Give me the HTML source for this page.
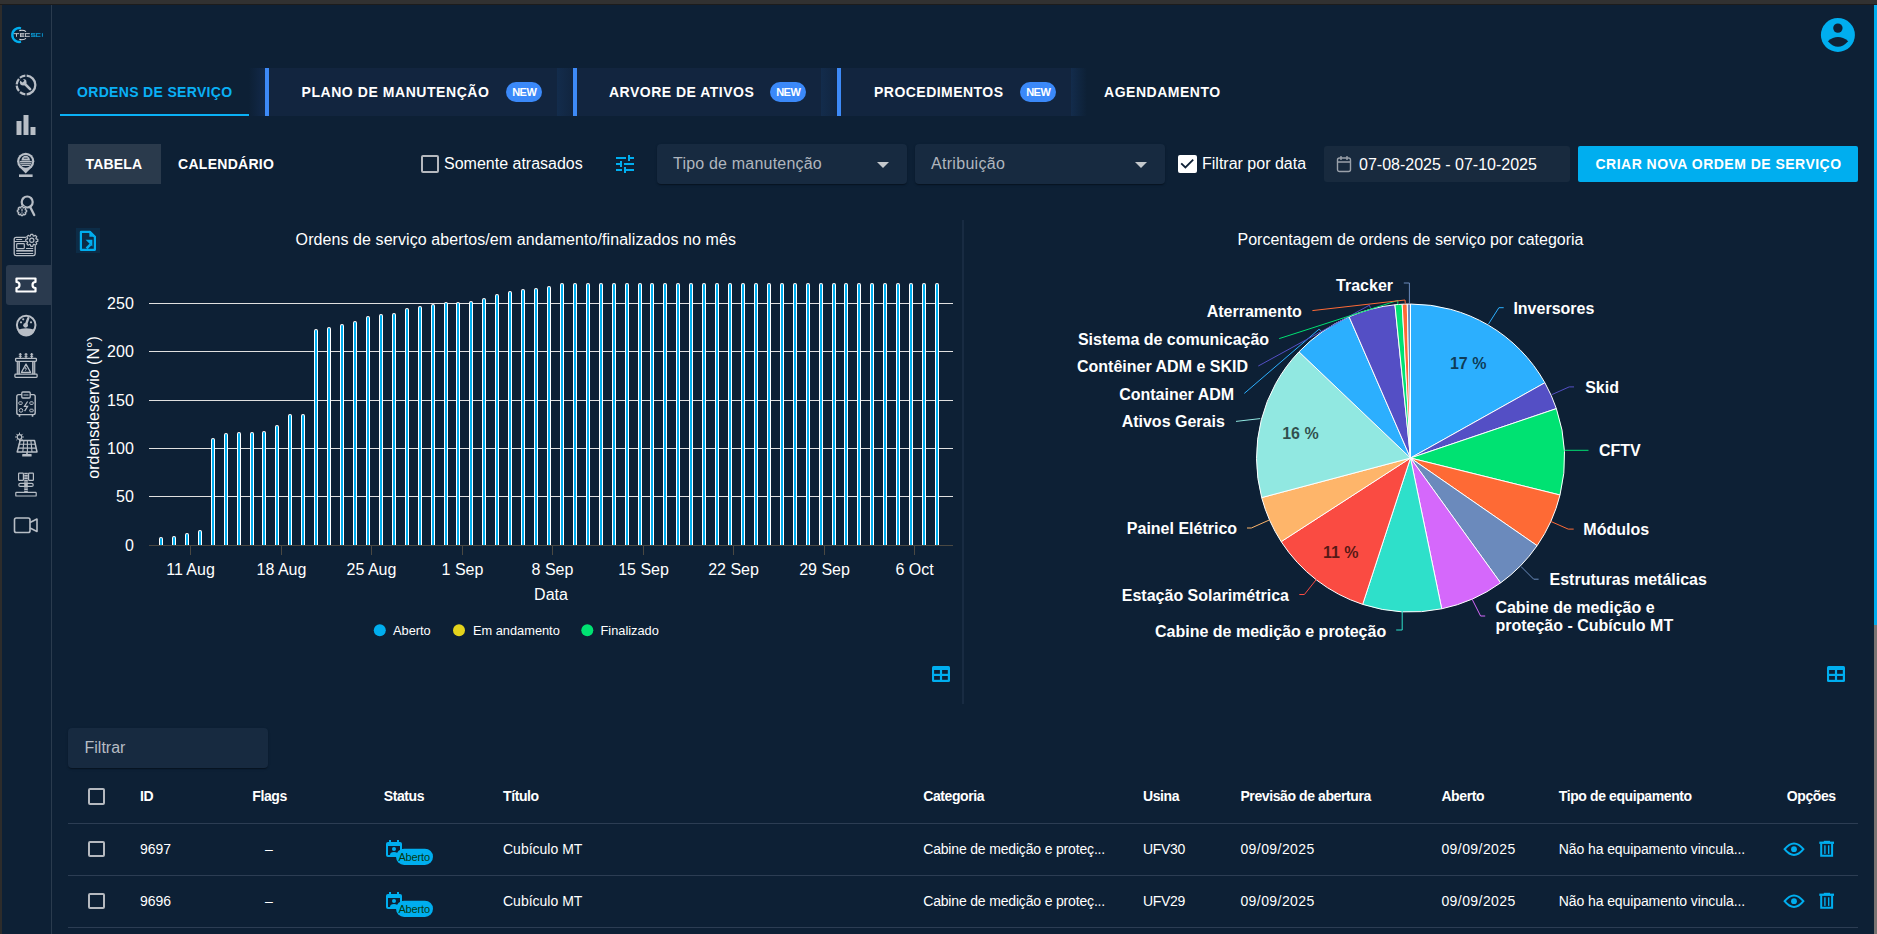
<!DOCTYPE html>
<html><head><meta charset="utf-8">
<style>
*{box-sizing:border-box;margin:0;padding:0}
html,body{width:1877px;height:934px;overflow:hidden;background:#0d2035;font-family:"Liberation Sans",sans-serif;color:#fff}
.a{position:absolute;white-space:nowrap;line-height:1}
#topbar{position:absolute;left:0;top:0;width:1877px;height:4px;background:#313131;border-bottom:1px solid #1c1c1c;box-sizing:content-box}
#leftbar{position:absolute;left:0;top:5px;width:2px;height:929px;background:#2d2c2b}
#sbline{position:absolute;left:51px;top:5px;width:1px;height:929px;background:#2a3b4e}
#scroll{position:absolute;left:1874px;top:5px;width:3px;height:929px;background:#7a7472}
#thumb{position:absolute;left:1874px;top:5px;width:3px;height:620px;background:#00aeef}
.tab{position:absolute;top:68px;height:48px;background:#12253f}
.grad{position:absolute;top:68px;height:48px;width:16px}
.bbar{position:absolute;top:68px;height:48px;width:4px;background:#3d8af7}
.tt{position:absolute;top:84.8px;font-size:14px;font-weight:bold;line-height:1;white-space:nowrap}
.new{position:absolute;top:82px;height:20px;width:36px;border-radius:10px;background:#3b89f9;font-size:11px;font-weight:bold;line-height:20px;text-align:center;letter-spacing:-0.5px;padding-left:0.5px}
.sel{position:absolute;top:144px;height:40px;background:#172a40;border-radius:4px;box-shadow:0 2px 1px -1px rgba(0,0,0,.2),0 1px 1px 0 rgba(0,0,0,.14),0 1px 3px 0 rgba(0,0,0,.12)}
.hd{position:absolute;top:789.3px;font-size:14px;font-weight:bold;line-height:1;white-space:nowrap;letter-spacing:-0.4px}
.cell{position:absolute;font-size:14px;line-height:1;white-space:nowrap}
.hr{position:absolute;left:68px;width:1790px;height:1px;background:#2c3d53}
.cb{position:absolute;width:17px;height:17px;border:2px solid #b5b9bf;border-radius:2px}
</style></head>
<body>
<div id="topbar"></div>
<div id="leftbar"></div>
<div id="sbline"></div>

<!-- SIDEBAR -->
<div class="a" style="left:6px;top:265px;width:45px;height:40px;background:#2a3a4e;border-radius:3px 0 0 3px"></div>
<svg class="a" style="left:0;top:0" width="52" height="560">
<path d="M21 28.3A7 6.9 0 1 0 21 41.7" stroke="#00aeef" stroke-width="2.4" fill="none"/>
<path d="M19.3 30.6Q23.5 29.6 26 31.6M19.3 39.4Q23.5 40.4 26 38.4" stroke="#d6d9dd" stroke-width="1.1" fill="none"/>
<path d="M13.8 33.65h5.4M16.5 33.6v3.2M20 33.65h4.4M20 35h4M20 36.35h4.4M20.45 33.6v3.2M25 33.65h4.8M25 36.35h4.8M25.45 33.6v3.2" stroke="#c9cdd2" stroke-width="0.9" fill="none"/>
<path d="M31 33.65h4.4M31.45 33.6v1.4M31 35h4M34.95 35v1.8M31 36.35h4.4M36 33.65h4.5M36 36.35h4.5M36.45 33.6v3.2M42.4 33.2v3.6" stroke="#0a9bd6" stroke-width="0.9" fill="none"/>
<path d="M26.65 75.72A9.3 9.3 0 0 1 26.65 94.28M25.35 94.28A9.3 9.3 0 0 1 20.02 92.12M18.98 91.10A9.3 9.3 0 0 1 16.72 85.65M16.72 84.35A9.3 9.3 0 0 1 18.98 78.90M20.02 77.88A9.3 9.3 0 0 1 25.35 75.72" stroke="#b8bec6" stroke-width="2.3" fill="none"/>
<path d="M24.5 83.5l5.6 5.6" stroke="#b8bec6" stroke-width="2.6" stroke-linecap="round"/><circle cx="23.2" cy="82.2" r="3.3" fill="#b8bec6"/><path d="M19.5 80.2l3.2 2.2 1.6-1.6-2.2-3.2z" fill="#0d2035"/>
<rect x="16.5" y="121" width="5" height="14" fill="#b8bec6"/><rect x="23.5" y="115" width="5" height="20" fill="#b8bec6"/><rect x="30.5" y="127" width="5" height="8" fill="#b8bec6"/>
<circle cx="25.7" cy="161.3" r="8.6" fill="#b8bec6"/><path d="M19.2 166.8l6.5 6.6 6.5-6.6z" fill="#b8bec6"/><rect x="19" y="174.4" width="13.6" height="2.6" fill="#b8bec6"/>
<circle cx="25.7" cy="161.3" r="6.4" fill="#0d2035"/>
<path d="M21.4 160.6a4.3 4.8 0 0 1 8.6 0z" fill="#b8bec6"/><rect x="19.6" y="160.9" width="12.2" height="1.5" fill="#b8bec6"/><rect x="20.2" y="163.1" width="11" height="1.3" fill="#b8bec6"/><rect x="21.5" y="165" width="8.4" height="1" fill="#b8bec6"/><path d="M23.8 158.2h3.8" stroke="#0d2035" stroke-width="0.8"/>
<circle cx="27.2" cy="202" r="5.5" stroke="#b8bec6" stroke-width="2.2" fill="none"/><path d="M30.2 207l4 8" stroke="#b8bec6" stroke-width="2.3" stroke-linecap="round"/>
<circle cx="22" cy="211" r="5.2" fill="#0d2035"/><path d="M21.23 206.36L22.77 206.36L23.15 207.69L23.53 207.85L24.73 207.18L25.82 208.27L25.15 209.47L25.31 209.85L26.64 210.23L26.64 211.77L25.31 212.15L25.15 212.53L25.82 213.73L24.73 214.82L23.53 214.15L23.15 214.31L22.77 215.64L21.23 215.64L20.85 214.31L20.47 214.15L19.27 214.82L18.18 213.73L18.85 212.53L18.69 212.15L17.36 211.77L17.36 210.23L18.69 209.85L18.85 209.47L18.18 208.27L19.27 207.18L20.47 207.85L20.85 207.69Z" stroke="#b8bec6" stroke-width="1.3" fill="#0d2035" stroke-linejoin="round"/>
<rect x="21.4" y="208.6" width="1.2" height="2.9" fill="#b8bec6"/><rect x="21.4" y="212.3" width="1.2" height="1.2" fill="#b8bec6"/>
<rect x="14.2" y="237.3" width="21" height="18.3" rx="2" stroke="#b8bec6" stroke-width="1.3" fill="none"/><path d="M14.2 241.5h12M16.2 239.5h6M26 248.5h7.2M16.2 253.5h17" stroke="#b8bec6" stroke-width="1.1"/><rect x="16.2" y="250" width="17" height="1.6" fill="#b8bec6"/><rect x="16.7" y="243.6" width="7.6" height="5" rx="0.8" stroke="#b8bec6" stroke-width="1.2" fill="none"/>
<circle cx="31.8" cy="240.3" r="6.6" fill="#0d2035"/><path d="M30.80 234.28L32.80 234.28L33.27 236.05L33.76 236.25L35.35 235.34L36.76 236.75L35.85 238.34L36.05 238.83L37.82 239.30L37.82 241.30L36.05 241.77L35.85 242.26L36.76 243.85L35.35 245.26L33.76 244.35L33.27 244.55L32.80 246.32L30.80 246.32L30.33 244.55L29.84 244.35L28.25 245.26L26.84 243.85L27.75 242.26L27.55 241.77L25.78 241.30L25.78 239.30L27.55 238.83L27.75 238.34L26.84 236.75L28.25 235.34L29.84 236.25L30.33 236.05Z" stroke="#b8bec6" stroke-width="1.2" fill="#0d2035" stroke-linejoin="round"/><circle cx="31.8" cy="240.3" r="2.1" stroke="#b8bec6" stroke-width="1.2" fill="none"/>
<path d="M16.5 278.5h19v3.5a3 3 0 0 0 0 6v3.5h-19v-3.5a3 3 0 0 0 0-6z" stroke="#fff" stroke-width="2.2" fill="none" stroke-linejoin="round"/>
<circle cx="26.2" cy="325" r="9.3" stroke="#b8bec6" stroke-width="2" fill="none"/><path d="M17.3 330Q26.2 326.6 35.1 330A9.4 9.4 0 0 1 17.3 330Z" fill="#b8bec6"/>
<path d="M25.6 325.5L28.3 318.2" stroke="#b8bec6" stroke-width="2.4" stroke-linecap="round"/><circle cx="25.6" cy="325.3" r="2.4" fill="#b8bec6"/><circle cx="21" cy="322.3" r="1.1" fill="#b8bec6"/><circle cx="23.2" cy="319.3" r="1.1" fill="#b8bec6"/><circle cx="31" cy="322.3" r="1.1" fill="#b8bec6"/>
<path d="M20.3 353v5M26 353v5M31.7 353v5" stroke="#b8bec6" stroke-width="1.3"/><path d="M18.8 354.3h3M24.5 354.3h3M30.2 354.3h3M18.8 356.3h3M24.5 356.3h3M30.2 356.3h3" stroke="#b8bec6" stroke-width="1"/>
<rect x="15.6" y="358.3" width="20.8" height="3" rx="0.8" stroke="#b8bec6" stroke-width="1.3" fill="none"/><rect x="14.9" y="374.2" width="22.2" height="3.2" rx="0.8" stroke="#b8bec6" stroke-width="1.3" fill="none"/>
<path d="M17.3 361.3v12.9M34.7 361.3v12.9" stroke="#b8bec6" stroke-width="1.2"/><rect x="18.3" y="361.3" width="1.6" height="12.9" fill="#b8bec6"/><rect x="32.1" y="361.3" width="1.6" height="12.9" fill="#b8bec6"/>
<path d="M26 364l-4.6 8.4h9.2z" stroke="#b8bec6" stroke-width="1.2" fill="none" stroke-linejoin="round"/><path d="M26.4 366.2l-1.6 2.4h1.8l-1.2 2.2" stroke="#b8bec6" stroke-width="0.8" fill="none"/>
<rect x="16.8" y="394.6" width="18.4" height="20" rx="1.8" stroke="#b8bec6" stroke-width="1.4" fill="none"/><rect x="21.8" y="392" width="8.4" height="6" rx="1" stroke="#b8bec6" stroke-width="1.3" fill="#0d2035"/><path d="M23.5 395h5" stroke="#b8bec6" stroke-width="1"/>
<path d="M19.5 414.6v2.2M32.5 414.6v2.2" stroke="#b8bec6" stroke-width="1.6"/><rect x="18.8" y="401.8" width="3.4" height="2.6" rx="0.8" stroke="#b8bec6" stroke-width="1" fill="none"/><rect x="29.8" y="401.8" width="3.4" height="2.6" rx="0.8" stroke="#b8bec6" stroke-width="1" fill="none"/><rect x="29.8" y="409.2" width="3.4" height="2.6" rx="0.8" stroke="#b8bec6" stroke-width="1" fill="none"/><circle cx="21" cy="410.4" r="1.8" stroke="#b8bec6" stroke-width="1" fill="none"/>
<path d="M27.6 401.5l-3.2 4.8h3.2l-3 4.8" stroke="#b8bec6" stroke-width="1.2" fill="none"/>
<circle cx="19.5" cy="437" r="2.3" stroke="#b8bec6" stroke-width="1.2" fill="none"/><path d="M19.5 432.6v1.6M19.5 439.8v1.6M15.1 437h1.6M22.3 437h1.6M16.4 433.9l1.1 1.1M21.5 439l1.1 1.1M16.4 440.1l1.1-1.1M21.5 435l1.1-1.1" stroke="#b8bec6" stroke-width="1"/>
<path d="M20.2 440.5H34.5L37 452H17.2Z" stroke="#b8bec6" stroke-width="1.5" fill="none" stroke-linejoin="round"/><path d="M18.6 444.3h16.8M17.9 448.1h18.2M23.9 440.5l-1.1 11.5M27.4 440.5v11.5M30.9 440.5l1.1 11.5" stroke="#b8bec6" stroke-width="1.1"/>
<path d="M27 452v2.5" stroke="#b8bec6" stroke-width="1.6"/><rect x="22.2" y="454" width="9.4" height="2.6" rx="0.6" fill="#b8bec6"/>
<rect x="18.6" y="473.2" width="4.8" height="7.2" rx="0.6" stroke="#b8bec6" stroke-width="1.2" fill="none"/><rect x="28.6" y="473.2" width="4.8" height="7.2" rx="0.6" stroke="#b8bec6" stroke-width="1.2" fill="none"/>
<rect x="24.2" y="472.8" width="3.6" height="20" fill="#b8bec6"/><path d="M24.2 474.5h3.6M24.2 477h3.6M24.2 479.5h3.6M24.2 482h3.6M24.2 488h3.6M24.2 490.5h3.6" stroke="#0d2035" stroke-width="0.7"/>
<rect x="18.8" y="483.4" width="14.4" height="3" rx="1.5" stroke="#b8bec6" stroke-width="1.2" fill="none"/><rect x="15.8" y="492.4" width="20.4" height="3.6" rx="0.6" stroke="#b8bec6" stroke-width="1.2" fill="none"/>
<rect x="14.5" y="518" width="15.5" height="14.5" rx="1.8" stroke="#b8bec6" stroke-width="1.6" fill="none"/><path d="M30 522.5l7-3.5v12.5l-7-3.5" stroke="#b8bec6" stroke-width="1.6" fill="none" stroke-linejoin="round"/>
</svg>

<!-- avatar -->
<svg class="a" style="left:1812px;top:10px" width="52" height="52"><circle cx="25.9" cy="24.9" r="17" fill="#00aeef"/><circle cx="25.9" cy="18.1" r="4.7" fill="#0f2136"/><path d="M15.9 31.2Q25.9 22.8 36.2 31.2Q25.9 42.2 15.9 31.2Z" fill="#0f2136"/></svg>

<!-- TABS -->
<div class="tt" style="left:77px;color:#0ab0f5;letter-spacing:0.33px">ORDENS DE SERVIÇO</div>
<div class="a" style="left:60px;top:114px;width:189px;height:2px;background:#0ab0f5"></div>

<div class="grad" style="left:249px;background:linear-gradient(90deg,rgba(17,40,70,0),#12294a)"></div>
<div class="bbar" style="left:265px"></div>
<div class="tab" style="left:269px;width:288px"></div>
<div class="tt" style="left:301.5px;letter-spacing:0.56px">PLANO DE MANUTENÇÃO</div>
<div class="new" style="left:506px">NEW</div>

<div class="grad" style="left:557px;background:linear-gradient(90deg,#132c4c,#11253f)"></div>
<div class="bbar" style="left:573px"></div>
<div class="tab" style="left:577px;width:244px"></div>
<div class="tt" style="left:609px;letter-spacing:0.49px">ARVORE DE ATIVOS</div>
<div class="new" style="left:770px">NEW</div>

<div class="grad" style="left:821px;background:linear-gradient(90deg,#132c4c,#11253f)"></div>
<div class="bbar" style="left:837px"></div>
<div class="tab" style="left:841px;width:230px"></div>
<div class="tt" style="left:874px;letter-spacing:0.47px">PROCEDIMENTOS</div>
<div class="new" style="left:1020px">NEW</div>
<div class="grad" style="left:1071px;background:linear-gradient(90deg,#132c4c,rgba(17,37,63,0))"></div>

<div class="tt" style="left:1104px;letter-spacing:0.52px">AGENDAMENTO</div>

<!-- FILTER ROW -->
<div class="a" style="left:68px;top:144px;width:93px;height:40px;background:#2a3a4c"></div>
<div class="tt" style="left:85.5px;top:157.3px;letter-spacing:0.2px">TABELA</div>
<div class="tt" style="left:178px;top:157.3px;letter-spacing:0.29px">CALENDÁRIO</div>

<div class="cb" style="left:420.5px;top:155px;width:18px;height:18px"></div>
<div class="a" style="left:444px;top:155.5px;font-size:16px">Somente atrasados</div>
<svg class="a" style="left:613px;top:152px" width="24" height="24" viewBox="0 0 24 24"><path fill="#00aeef" d="M3 17v2h6v-2H3zM3 5v2h10V5H3zm10 16v-2h8v-2h-8v-2h-2v6h2zM7 9v2H3v2h4v2h2V9H7zm14 4v-2H11v2h10zm-6-4h2V7h4V5h-4V3h-2v6z"/></svg>

<div class="sel" style="left:657px;width:250px"></div>
<div class="a" style="left:673px;top:156px;font-size:16px;color:#b0b6be;letter-spacing:0.2px">Tipo de manutenção</div>
<svg class="a" style="left:876px;top:161px" width="14" height="7"><path d="M1 1h12L7 7z" fill="#c4c8cc"/></svg>

<div class="sel" style="left:915px;width:250px"></div>
<div class="a" style="left:931px;top:156px;font-size:16px;color:#b0b6be;letter-spacing:0.3px">Atribuição</div>
<svg class="a" style="left:1134px;top:161px" width="14" height="7"><path d="M1 1h12L7 7z" fill="#c4c8cc"/></svg>

<div class="a" style="left:1178px;top:155px;width:19px;height:18px;background:#fff;border-radius:2px"></div>
<svg class="a" style="left:1178px;top:155px" width="19" height="18" viewBox="0 0 19 18"><path d="M3.2 8.3l4.2 4.2 7.8-7.8" stroke="#0f2136" stroke-width="1.8" fill="none"/></svg>
<div class="a" style="left:1202px;top:155.5px;font-size:16px">Filtrar por data</div>

<div class="a" style="left:1324px;top:146px;width:246px;height:36px;background:#182a3e;border-radius:3px"></div>
<svg class="a" style="left:1336px;top:155px" width="16" height="18" viewBox="0 0 16 18"><rect x="1.5" y="3" width="13" height="13.5" rx="2" stroke="#9aa1aa" stroke-width="1.4" fill="none"/><path d="M1.5 7h13M5 1v4M11 1v4" stroke="#9aa1aa" stroke-width="1.4"/></svg>
<div class="a" style="left:1359px;top:157px;font-size:16px">07-08-2025 - 07-10-2025</div>

<div class="a" style="left:1578px;top:146px;width:280px;height:36px;background:#00aeef;border-radius:2px"></div>
<div class="tt" style="left:1595.5px;top:157.2px;letter-spacing:0.48px">CRIAR NOVA ORDEM DE SERVIÇO</div>

<!-- CHARTS -->
<svg class="a" style="left:0;top:0" width="1877" height="934">
<rect x="149" y="303" width="804" height="1" fill="#e0e0e0"/>
<text x="133.8" y="309.3" text-anchor="end" font-size="16" fill="#fff">250</text>
<rect x="149" y="351" width="804" height="1" fill="#e0e0e0"/>
<text x="133.8" y="357.3" text-anchor="end" font-size="16" fill="#fff">200</text>
<rect x="149" y="400" width="804" height="1" fill="#e0e0e0"/>
<text x="133.8" y="406.3" text-anchor="end" font-size="16" fill="#fff">150</text>
<rect x="149" y="448" width="804" height="1" fill="#e0e0e0"/>
<text x="133.8" y="454.3" text-anchor="end" font-size="16" fill="#fff">100</text>
<rect x="149" y="496" width="804" height="1" fill="#e0e0e0"/>
<text x="133.8" y="502.3" text-anchor="end" font-size="16" fill="#fff">50</text>
<text x="133.8" y="550.6" text-anchor="end" font-size="16" fill="#fff">0</text>
<rect x="190" y="546" width="1" height="9" fill="#4a4842"/>
<text x="190.5" y="575.4" text-anchor="middle" font-size="16" fill="#fff">11 Aug</text>
<rect x="281" y="546" width="1" height="9" fill="#4a4842"/>
<text x="281.5" y="575.4" text-anchor="middle" font-size="16" fill="#fff">18 Aug</text>
<rect x="371" y="546" width="1" height="9" fill="#4a4842"/>
<text x="371.5" y="575.4" text-anchor="middle" font-size="16" fill="#fff">25 Aug</text>
<rect x="462" y="546" width="1" height="9" fill="#4a4842"/>
<text x="462.5" y="575.4" text-anchor="middle" font-size="16" fill="#fff">1 Sep</text>
<rect x="552" y="546" width="1" height="9" fill="#4a4842"/>
<text x="552.5" y="575.4" text-anchor="middle" font-size="16" fill="#fff">8 Sep</text>
<rect x="643" y="546" width="1" height="9" fill="#4a4842"/>
<text x="643.5" y="575.4" text-anchor="middle" font-size="16" fill="#fff">15 Sep</text>
<rect x="733" y="546" width="1" height="9" fill="#4a4842"/>
<text x="733.5" y="575.4" text-anchor="middle" font-size="16" fill="#fff">22 Sep</text>
<rect x="824" y="546" width="1" height="9" fill="#4a4842"/>
<text x="824.5" y="575.4" text-anchor="middle" font-size="16" fill="#fff">29 Sep</text>
<rect x="914" y="546" width="1" height="9" fill="#4a4842"/>
<text x="914.5" y="575.4" text-anchor="middle" font-size="16" fill="#fff">6 Oct</text>
<text x="551" y="600.2" text-anchor="middle" font-size="16" fill="#fff">Data</text>
<text transform="translate(98.5,407.5) rotate(-90)" text-anchor="middle" font-size="16" fill="#fff">ordensdeservio (N°)</text>
<path d="M159 545V539a2 2 0 0 1 4 0V545z" fill="#fff"/>
<path d="M160 545V539a1 1 0 0 1 2 0V545z" fill="#00aeef"/>
<path d="M172 545V538a2 2 0 0 1 4 0V545z" fill="#fff"/>
<path d="M173 545V538a1 1 0 0 1 2 0V545z" fill="#00aeef"/>
<path d="M185 545V535a2 2 0 0 1 4 0V545z" fill="#fff"/>
<path d="M186 545V535a1 1 0 0 1 2 0V545z" fill="#00aeef"/>
<path d="M198 545V532a2 2 0 0 1 4 0V545z" fill="#fff"/>
<path d="M199 545V532a1 1 0 0 1 2 0V545z" fill="#00aeef"/>
<path d="M211 545V440a2 2 0 0 1 4 0V545z" fill="#fff"/>
<path d="M212 545V440a1 1 0 0 1 2 0V545z" fill="#00aeef"/>
<path d="M224 545V435a2 2 0 0 1 4 0V545z" fill="#fff"/>
<path d="M225 545V435a1 1 0 0 1 2 0V545z" fill="#00aeef"/>
<path d="M237 545V434a2 2 0 0 1 4 0V545z" fill="#fff"/>
<path d="M238 545V434a1 1 0 0 1 2 0V545z" fill="#00aeef"/>
<path d="M250 545V434a2 2 0 0 1 4 0V545z" fill="#fff"/>
<path d="M251 545V434a1 1 0 0 1 2 0V545z" fill="#00aeef"/>
<path d="M262 545V433a2 2 0 0 1 4 0V545z" fill="#fff"/>
<path d="M263 545V433a1 1 0 0 1 2 0V545z" fill="#00aeef"/>
<path d="M275 545V427a2 2 0 0 1 4 0V545z" fill="#fff"/>
<path d="M276 545V427a1 1 0 0 1 2 0V545z" fill="#00aeef"/>
<path d="M288 545V416a2 2 0 0 1 4 0V545z" fill="#fff"/>
<path d="M289 545V416a1 1 0 0 1 2 0V545z" fill="#00aeef"/>
<path d="M301 545V416a2 2 0 0 1 4 0V545z" fill="#fff"/>
<path d="M302 545V416a1 1 0 0 1 2 0V545z" fill="#00aeef"/>
<path d="M314 545V331a2 2 0 0 1 4 0V545z" fill="#fff"/>
<path d="M315 545V331a1 1 0 0 1 2 0V545z" fill="#00aeef"/>
<path d="M327 545V329a2 2 0 0 1 4 0V545z" fill="#fff"/>
<path d="M328 545V329a1 1 0 0 1 2 0V545z" fill="#00aeef"/>
<path d="M340 545V326a2 2 0 0 1 4 0V545z" fill="#fff"/>
<path d="M341 545V326a1 1 0 0 1 2 0V545z" fill="#00aeef"/>
<path d="M353 545V323a2 2 0 0 1 4 0V545z" fill="#fff"/>
<path d="M354 545V323a1 1 0 0 1 2 0V545z" fill="#00aeef"/>
<path d="M366 545V318a2 2 0 0 1 4 0V545z" fill="#fff"/>
<path d="M367 545V318a1 1 0 0 1 2 0V545z" fill="#00aeef"/>
<path d="M379 545V316a2 2 0 0 1 4 0V545z" fill="#fff"/>
<path d="M380 545V316a1 1 0 0 1 2 0V545z" fill="#00aeef"/>
<path d="M392 545V315a2 2 0 0 1 4 0V545z" fill="#fff"/>
<path d="M393 545V315a1 1 0 0 1 2 0V545z" fill="#00aeef"/>
<path d="M405 545V310a2 2 0 0 1 4 0V545z" fill="#fff"/>
<path d="M406 545V310a1 1 0 0 1 2 0V545z" fill="#00aeef"/>
<path d="M418 545V308a2 2 0 0 1 4 0V545z" fill="#fff"/>
<path d="M419 545V308a1 1 0 0 1 2 0V545z" fill="#00aeef"/>
<path d="M431 545V306a2 2 0 0 1 4 0V545z" fill="#fff"/>
<path d="M432 545V306a1 1 0 0 1 2 0V545z" fill="#00aeef"/>
<path d="M444 545V304a2 2 0 0 1 4 0V545z" fill="#fff"/>
<path d="M445 545V304a1 1 0 0 1 2 0V545z" fill="#00aeef"/>
<path d="M456 545V304a2 2 0 0 1 4 0V545z" fill="#fff"/>
<path d="M457 545V304a1 1 0 0 1 2 0V545z" fill="#00aeef"/>
<path d="M469 545V303a2 2 0 0 1 4 0V545z" fill="#fff"/>
<path d="M470 545V303a1 1 0 0 1 2 0V545z" fill="#00aeef"/>
<path d="M482 545V300a2 2 0 0 1 4 0V545z" fill="#fff"/>
<path d="M483 545V300a1 1 0 0 1 2 0V545z" fill="#00aeef"/>
<path d="M495 545V296a2 2 0 0 1 4 0V545z" fill="#fff"/>
<path d="M496 545V296a1 1 0 0 1 2 0V545z" fill="#00aeef"/>
<path d="M508 545V293a2 2 0 0 1 4 0V545z" fill="#fff"/>
<path d="M509 545V293a1 1 0 0 1 2 0V545z" fill="#00aeef"/>
<path d="M521 545V291a2 2 0 0 1 4 0V545z" fill="#fff"/>
<path d="M522 545V291a1 1 0 0 1 2 0V545z" fill="#00aeef"/>
<path d="M534 545V290a2 2 0 0 1 4 0V545z" fill="#fff"/>
<path d="M535 545V290a1 1 0 0 1 2 0V545z" fill="#00aeef"/>
<path d="M547 545V288a2 2 0 0 1 4 0V545z" fill="#fff"/>
<path d="M548 545V288a1 1 0 0 1 2 0V545z" fill="#00aeef"/>
<path d="M560 545V285a2 2 0 0 1 4 0V545z" fill="#fff"/>
<path d="M561 545V285a1 1 0 0 1 2 0V545z" fill="#00aeef"/>
<path d="M573 545V285a2 2 0 0 1 4 0V545z" fill="#fff"/>
<path d="M574 545V285a1 1 0 0 1 2 0V545z" fill="#00aeef"/>
<path d="M586 545V285a2 2 0 0 1 4 0V545z" fill="#fff"/>
<path d="M587 545V285a1 1 0 0 1 2 0V545z" fill="#00aeef"/>
<path d="M599 545V285a2 2 0 0 1 4 0V545z" fill="#fff"/>
<path d="M600 545V285a1 1 0 0 1 2 0V545z" fill="#00aeef"/>
<path d="M612 545V285a2 2 0 0 1 4 0V545z" fill="#fff"/>
<path d="M613 545V285a1 1 0 0 1 2 0V545z" fill="#00aeef"/>
<path d="M625 545V285a2 2 0 0 1 4 0V545z" fill="#fff"/>
<path d="M626 545V285a1 1 0 0 1 2 0V545z" fill="#00aeef"/>
<path d="M638 545V285a2 2 0 0 1 4 0V545z" fill="#fff"/>
<path d="M639 545V285a1 1 0 0 1 2 0V545z" fill="#00aeef"/>
<path d="M650 545V285a2 2 0 0 1 4 0V545z" fill="#fff"/>
<path d="M651 545V285a1 1 0 0 1 2 0V545z" fill="#00aeef"/>
<path d="M663 545V285a2 2 0 0 1 4 0V545z" fill="#fff"/>
<path d="M664 545V285a1 1 0 0 1 2 0V545z" fill="#00aeef"/>
<path d="M676 545V285a2 2 0 0 1 4 0V545z" fill="#fff"/>
<path d="M677 545V285a1 1 0 0 1 2 0V545z" fill="#00aeef"/>
<path d="M689 545V285a2 2 0 0 1 4 0V545z" fill="#fff"/>
<path d="M690 545V285a1 1 0 0 1 2 0V545z" fill="#00aeef"/>
<path d="M702 545V285a2 2 0 0 1 4 0V545z" fill="#fff"/>
<path d="M703 545V285a1 1 0 0 1 2 0V545z" fill="#00aeef"/>
<path d="M715 545V285a2 2 0 0 1 4 0V545z" fill="#fff"/>
<path d="M716 545V285a1 1 0 0 1 2 0V545z" fill="#00aeef"/>
<path d="M728 545V285a2 2 0 0 1 4 0V545z" fill="#fff"/>
<path d="M729 545V285a1 1 0 0 1 2 0V545z" fill="#00aeef"/>
<path d="M741 545V285a2 2 0 0 1 4 0V545z" fill="#fff"/>
<path d="M742 545V285a1 1 0 0 1 2 0V545z" fill="#00aeef"/>
<path d="M754 545V285a2 2 0 0 1 4 0V545z" fill="#fff"/>
<path d="M755 545V285a1 1 0 0 1 2 0V545z" fill="#00aeef"/>
<path d="M767 545V285a2 2 0 0 1 4 0V545z" fill="#fff"/>
<path d="M768 545V285a1 1 0 0 1 2 0V545z" fill="#00aeef"/>
<path d="M780 545V285a2 2 0 0 1 4 0V545z" fill="#fff"/>
<path d="M781 545V285a1 1 0 0 1 2 0V545z" fill="#00aeef"/>
<path d="M793 545V285a2 2 0 0 1 4 0V545z" fill="#fff"/>
<path d="M794 545V285a1 1 0 0 1 2 0V545z" fill="#00aeef"/>
<path d="M806 545V285a2 2 0 0 1 4 0V545z" fill="#fff"/>
<path d="M807 545V285a1 1 0 0 1 2 0V545z" fill="#00aeef"/>
<path d="M819 545V285a2 2 0 0 1 4 0V545z" fill="#fff"/>
<path d="M820 545V285a1 1 0 0 1 2 0V545z" fill="#00aeef"/>
<path d="M832 545V285a2 2 0 0 1 4 0V545z" fill="#fff"/>
<path d="M833 545V285a1 1 0 0 1 2 0V545z" fill="#00aeef"/>
<path d="M844 545V285a2 2 0 0 1 4 0V545z" fill="#fff"/>
<path d="M845 545V285a1 1 0 0 1 2 0V545z" fill="#00aeef"/>
<path d="M857 545V285a2 2 0 0 1 4 0V545z" fill="#fff"/>
<path d="M858 545V285a1 1 0 0 1 2 0V545z" fill="#00aeef"/>
<path d="M870 545V285a2 2 0 0 1 4 0V545z" fill="#fff"/>
<path d="M871 545V285a1 1 0 0 1 2 0V545z" fill="#00aeef"/>
<path d="M883 545V285a2 2 0 0 1 4 0V545z" fill="#fff"/>
<path d="M884 545V285a1 1 0 0 1 2 0V545z" fill="#00aeef"/>
<path d="M896 545V285a2 2 0 0 1 4 0V545z" fill="#fff"/>
<path d="M897 545V285a1 1 0 0 1 2 0V545z" fill="#00aeef"/>
<path d="M909 545V285a2 2 0 0 1 4 0V545z" fill="#fff"/>
<path d="M910 545V285a1 1 0 0 1 2 0V545z" fill="#00aeef"/>
<path d="M922 545V285a2 2 0 0 1 4 0V545z" fill="#fff"/>
<path d="M923 545V285a1 1 0 0 1 2 0V545z" fill="#00aeef"/>
<path d="M935 545V285a2 2 0 0 1 4 0V545z" fill="#fff"/>
<path d="M936 545V285a1 1 0 0 1 2 0V545z" fill="#00aeef"/>
<rect x="149" y="545" width="804" height="1" fill="#4a4842"/>
<text x="515.8" y="245.4" text-anchor="middle" font-size="16" letter-spacing="0.08" fill="#fff">Ordens de serviço abertos/em andamento/finalizados no mês</text>
<circle cx="379.8" cy="630.3" r="6" fill="#00aeef"/>
<text x="393" y="634.8" font-size="12.8" fill="#fff">Aberto</text>
<circle cx="459" cy="630.3" r="6" fill="#e4d31c"/>
<text x="473" y="634.8" font-size="12.8" fill="#fff">Em andamento</text>
<circle cx="587.3" cy="630.3" r="6" fill="#00e272"/>
<text x="600.5" y="634.8" font-size="12.8" fill="#fff">Finalizado</text>
<rect x="76" y="228" width="24" height="25" fill="#0c2c47"/>
<path d="M80.9 231.9H89.9L94.9 236.9V249.8H80.9Z" fill="none" stroke="#00aeef" stroke-width="2.2" stroke-linejoin="round"/><path d="M89.4 230.8V236.8H96z" fill="#00aeef"/><path d="M92.4 239.8V246.6L85.6 239.8z" fill="#00aeef"/><path d="M86.6 248.3L90.6 244.3" stroke="#00aeef" stroke-width="2.6"/>
<rect x="932" y="666" width="18" height="16" rx="1.5" fill="#00aeef"/><rect x="934.1" y="670" width="5.8" height="3.8" fill="#0d2035"/><rect x="942.1" y="670" width="5.7" height="3.8" fill="#0d2035"/><rect x="934.1" y="676" width="5.8" height="3.8" fill="#0d2035"/><rect x="942.1" y="676" width="5.7" height="3.8" fill="#0d2035"/>
<rect x="1827" y="666" width="18" height="16" rx="1.5" fill="#00aeef"/><rect x="1829.1" y="670" width="5.8" height="3.8" fill="#0d2035"/><rect x="1837.1" y="670" width="5.7" height="3.8" fill="#0d2035"/><rect x="1829.1" y="676" width="5.8" height="3.8" fill="#0d2035"/><rect x="1837.1" y="676" width="5.7" height="3.8" fill="#0d2035"/>
<rect x="962.5" y="220" width="1" height="484" fill="#243650"/>
<path d="M1410.5 458L1410.50 304.00A154 154 0 0 1 1544.86 382.75Z" fill="#2caffe" stroke="#fff" stroke-width="1" stroke-linejoin="round"/>
<path d="M1410.5 458L1544.86 382.75A154 154 0 0 1 1556.37 408.63Z" fill="#544fc5" stroke="#fff" stroke-width="1" stroke-linejoin="round"/>
<path d="M1410.5 458L1556.37 408.63A154 154 0 0 1 1559.99 495.00Z" fill="#00e272" stroke="#fff" stroke-width="1" stroke-linejoin="round"/>
<path d="M1410.5 458L1559.99 495.00A154 154 0 0 1 1537.11 545.67Z" fill="#fe6a35" stroke="#fff" stroke-width="1" stroke-linejoin="round"/>
<path d="M1410.5 458L1537.11 545.67A154 154 0 0 1 1500.58 582.90Z" fill="#6b8abc" stroke="#fff" stroke-width="1" stroke-linejoin="round"/>
<path d="M1410.5 458L1500.58 582.90A154 154 0 0 1 1441.73 608.80Z" fill="#d568fb" stroke="#fff" stroke-width="1" stroke-linejoin="round"/>
<path d="M1410.5 458L1441.73 608.80A154 154 0 0 1 1362.66 604.38Z" fill="#2ee0ca" stroke="#fff" stroke-width="1" stroke-linejoin="round"/>
<path d="M1410.5 458L1362.66 604.38A154 154 0 0 1 1281.20 541.65Z" fill="#fa4b42" stroke="#fff" stroke-width="1" stroke-linejoin="round"/>
<path d="M1410.5 458L1281.20 541.65A154 154 0 0 1 1261.68 497.60Z" fill="#feb56a" stroke="#fff" stroke-width="1" stroke-linejoin="round"/>
<path d="M1410.5 458L1261.68 497.60A154 154 0 0 1 1298.98 351.80Z" fill="#91e8e1" stroke="#fff" stroke-width="1" stroke-linejoin="round"/>
<path d="M1410.5 458L1298.98 351.80A154 154 0 0 1 1349.09 316.77Z" fill="#2caffe" stroke="#fff" stroke-width="1" stroke-linejoin="round"/>
<path d="M1410.5 458L1349.09 316.77A154 154 0 0 1 1394.94 304.79Z" fill="#544fc5" stroke="#fff" stroke-width="1" stroke-linejoin="round"/>
<path d="M1410.5 458L1394.94 304.79A154 154 0 0 1 1402.17 304.23Z" fill="#00e272" stroke="#fff" stroke-width="1" stroke-linejoin="round"/>
<path d="M1410.5 458L1402.17 304.23A154 154 0 0 1 1407.27 304.03Z" fill="#fe6a35" stroke="#fff" stroke-width="1" stroke-linejoin="round"/>
<path d="M1410.5 458L1407.27 304.03A154 154 0 0 1 1410.50 304.00Z" fill="#6b8abc" stroke="#fff" stroke-width="1" stroke-linejoin="round"/>
<text x="1410.5" y="245.4" text-anchor="middle" font-size="16" fill="#fff">Porcentagem de ordens de serviço por categoria</text>
<text x="1468.2" y="369.2" text-anchor="middle" font-size="16" font-weight="bold" fill="#000" fill-opacity="0.68">17 %</text>
<text x="1300.4" y="438.7" text-anchor="middle" font-size="16" font-weight="bold" fill="#000" fill-opacity="0.68">16 %</text>
<text x="1340.8" y="557.5999999999999" text-anchor="middle" font-size="16" font-weight="bold" fill="#000" fill-opacity="0.68">11 %</text>
<path d="M1488.3 324.3L1498.9 307.7L1503.7 307.7" fill="none" stroke="#2caffe" stroke-width="1"/>
<text x="1513.4" y="313.8" text-anchor="start" font-size="16" font-weight="bold" fill="#fff">Inversores</text>
<path d="M1551.9 394.6L1569.2 386.9L1574.0 386.9" fill="none" stroke="#544fc5" stroke-width="1"/>
<text x="1585.2" y="392.9" text-anchor="start" font-size="16" font-weight="bold" fill="#fff">Skid</text>
<path d="M1564.4 450.3L1588.5 450.3" fill="none" stroke="#00e272" stroke-width="1"/>
<text x="1599" y="456.3" text-anchor="start" font-size="16" font-weight="bold" fill="#fff">CFTV</text>
<path d="M1551.0 521.5L1568.2 529.1L1573.7 529.1" fill="none" stroke="#fe6a35" stroke-width="1"/>
<text x="1583.3" y="535.1" text-anchor="start" font-size="16" font-weight="bold" fill="#fff">Módulos</text>
<path d="M1520.9 566.4L1533.7 579.2L1538.6 579.2" fill="none" stroke="#6b8abc" stroke-width="1"/>
<text x="1549.5" y="585.2" text-anchor="start" font-size="16" font-weight="bold" fill="#fff">Estruturas metálicas</text>
<path d="M1472.0 599.0L1480.6 616.0L1485.2 616.0" fill="none" stroke="#d568fb" stroke-width="1"/>
<text x="1495.4" y="612.6" text-anchor="start" font-size="16" font-weight="bold" fill="#fff">Cabine de medição e</text>
<path d="M1402.2 611.0L1402.2 630.0L1396.2 630.0" fill="none" stroke="#2ee0ca" stroke-width="1"/>
<text x="1386.2" y="636.5" text-anchor="end" font-size="16" font-weight="bold" fill="#fff">Cabine de medição e proteção</text>
<path d="M1316.4 579.4L1304.4 594.5L1299.3 594.5" fill="none" stroke="#fa4b42" stroke-width="1"/>
<text x="1289" y="600.5" text-anchor="end" font-size="16" font-weight="bold" fill="#fff">Estação Solarimétrica</text>
<path d="M1269.3 520.0L1251.3 528.0L1247.0 528.0" fill="none" stroke="#feb56a" stroke-width="1"/>
<text x="1237.1" y="534" text-anchor="end" font-size="16" font-weight="bold" fill="#fff">Painel Elétrico</text>
<path d="M1260.2 418.6L1236.0 421.4" fill="none" stroke="#91e8e1" stroke-width="1"/>
<text x="1224.8" y="427.4" text-anchor="end" font-size="16" font-weight="bold" fill="#fff">Ativos Gerais</text>
<path d="M1320.8 330.6L1318.9 329.3L1244.3 393.4" fill="none" stroke="#2caffe" stroke-width="1"/>
<text x="1234.1" y="400.4" text-anchor="end" font-size="16" font-weight="bold" fill="#fff">Container ADM</text>
<path d="M1370.5 308.2L1369.4 305.2L1258.3 366.0" fill="none" stroke="#544fc5" stroke-width="1"/>
<text x="1248" y="372" text-anchor="end" font-size="16" font-weight="bold" fill="#fff">Contêiner ADM e SKID</text>
<path d="M1397.8 304.1L1397.8 300.4L1279.2 338.6" fill="none" stroke="#00e272" stroke-width="1"/>
<text x="1269.1" y="345" text-anchor="end" font-size="16" font-weight="bold" fill="#fff">Sistema de comunicação</text>
<path d="M1405.3 303.7L1405.0 300.0L1312.4 310.6" fill="none" stroke="#fe6a35" stroke-width="1"/>
<text x="1301.8" y="317.4" text-anchor="end" font-size="16" font-weight="bold" fill="#fff">Aterramento</text>
<path d="M1409.4 303.6L1409.4 283.0L1403.8 283.0" fill="none" stroke="#6b8abc" stroke-width="1"/>
<text x="1393" y="290.5" text-anchor="end" font-size="16" font-weight="bold" fill="#fff">Tracker</text>
<text x="1495.4" y="631.4" font-size="16" font-weight="bold" fill="#fff">proteção - Cubículo MT</text>
</svg>

<!-- TABLE -->
<div class="a" style="left:68px;top:728px;width:200px;height:39.5px;background:#172a40;border-radius:4px;box-shadow:0 2px 1px -1px rgba(0,0,0,.2),0 1px 1px 0 rgba(0,0,0,.14),0 1px 3px 0 rgba(0,0,0,.12)"></div>
<div class="a" style="left:84.5px;top:735px;font-size:16px;line-height:26px;color:#b6bcc4">Filtrar</div>
<div class="cb" style="left:88px;top:788px;width:16.5px;height:16.5px"></div>
<div class="hd" style="left:140px">ID</div>
<div class="hd" style="left:252.3px">Flags</div>
<div class="hd" style="left:383.7px">Status</div>
<div class="hd" style="left:503px">Título</div>
<div class="hd" style="left:923.2px">Categoria</div>
<div class="hd" style="left:1143px">Usina</div>
<div class="hd" style="left:1240.4px">Previsão de abertura</div>
<div class="hd" style="left:1441.4px">Aberto</div>
<div class="hd" style="left:1558.8px">Tipo de equipamento</div>
<div class="hd" style="left:1786.8px">Opções</div>
<div class="hr" style="top:822.6px"></div>
<div class="cb" style="left:88px;top:840.5px;width:16.5px;height:16.5px"></div>
<div class="cell" style="left:140px;top:842.15px">9697</div>
<div class="cell" style="left:265px;top:842.15px">–</div>
<div class="cell" style="left:503px;top:842.15px">Cubículo MT</div>
<div class="cell" style="left:923.2px;top:842.15px;letter-spacing:-0.17px">Cabine de medição e proteç...</div>
<div class="cell" style="left:1143px;top:842.15px;letter-spacing:-0.3px">UFV30</div>
<div class="cell" style="left:1240.4px;top:842.15px;letter-spacing:0.43px">09/09/2025</div>
<div class="cell" style="left:1441.4px;top:842.15px;letter-spacing:0.43px">09/09/2025</div>
<div class="cell" style="left:1558.8px;top:842.15px;letter-spacing:-0.1px">Não ha equipamento vincula...</div>
<svg class="a" style="left:385px;top:840px" width="50" height="27" viewBox="0 0 50 27"><rect x="1" y="2" width="16" height="15" rx="2" fill="#00aeef"/><rect x="4" y="0" width="2" height="4" fill="#00aeef"/><rect x="12" y="0" width="2" height="4" fill="#00aeef"/><rect x="3" y="6" width="12" height="9" fill="#0e1f33"/><circle cx="9" cy="9" r="2" fill="#00aeef"/><path d="M5 15a4 3 0 0 1 8 0z" fill="#00aeef"/><rect x="11" y="8.7" width="37" height="16.2" rx="8.1" fill="#00aeef"/><text x="13.4" y="20.6" font-size="11" letter-spacing="-0.15" fill="#063a10">Aberto</text></svg>
<svg class="a" style="left:1778px;top:836px" width="64" height="28"><path d="M6.6 13.2Q16 1.6 25.4 13.2Q16 24.8 6.6 13.2Z" fill="none" stroke="#00aeef" stroke-width="2"/><circle cx="16" cy="13.2" r="2.9" fill="#00aeef"/><rect x="41.3" y="5.6" width="14.7" height="2.3" fill="#00aeef"/><rect x="45.8" y="4.8" width="6.2" height="1.6" fill="#00aeef"/><path d="M43.2 7.5V19.8H54.1V7.5" fill="none" stroke="#00aeef" stroke-width="2"/><rect x="46.2" y="9.3" width="1.4" height="8.6" fill="#00aeef"/><rect x="50" y="9.3" width="1.4" height="8.6" fill="#00aeef"/></svg>
<div class="hr" style="top:874.6px"></div>
<div class="cb" style="left:88px;top:892.5px;width:16.5px;height:16.5px"></div>
<div class="cell" style="left:140px;top:894.15px">9696</div>
<div class="cell" style="left:265px;top:894.15px">–</div>
<div class="cell" style="left:503px;top:894.15px">Cubículo MT</div>
<div class="cell" style="left:923.2px;top:894.15px;letter-spacing:-0.17px">Cabine de medição e proteç...</div>
<div class="cell" style="left:1143px;top:894.15px;letter-spacing:-0.3px">UFV29</div>
<div class="cell" style="left:1240.4px;top:894.15px;letter-spacing:0.43px">09/09/2025</div>
<div class="cell" style="left:1441.4px;top:894.15px;letter-spacing:0.43px">09/09/2025</div>
<div class="cell" style="left:1558.8px;top:894.15px;letter-spacing:-0.1px">Não ha equipamento vincula...</div>
<svg class="a" style="left:385px;top:892px" width="50" height="27" viewBox="0 0 50 27"><rect x="1" y="2" width="16" height="15" rx="2" fill="#00aeef"/><rect x="4" y="0" width="2" height="4" fill="#00aeef"/><rect x="12" y="0" width="2" height="4" fill="#00aeef"/><rect x="3" y="6" width="12" height="9" fill="#0e1f33"/><circle cx="9" cy="9" r="2" fill="#00aeef"/><path d="M5 15a4 3 0 0 1 8 0z" fill="#00aeef"/><rect x="11" y="8.7" width="37" height="16.2" rx="8.1" fill="#00aeef"/><text x="13.4" y="20.6" font-size="11" letter-spacing="-0.15" fill="#063a10">Aberto</text></svg>
<svg class="a" style="left:1778px;top:888px" width="64" height="28"><path d="M6.6 13.2Q16 1.6 25.4 13.2Q16 24.8 6.6 13.2Z" fill="none" stroke="#00aeef" stroke-width="2"/><circle cx="16" cy="13.2" r="2.9" fill="#00aeef"/><rect x="41.3" y="5.6" width="14.7" height="2.3" fill="#00aeef"/><rect x="45.8" y="4.8" width="6.2" height="1.6" fill="#00aeef"/><path d="M43.2 7.5V19.8H54.1V7.5" fill="none" stroke="#00aeef" stroke-width="2"/><rect x="46.2" y="9.3" width="1.4" height="8.6" fill="#00aeef"/><rect x="50" y="9.3" width="1.4" height="8.6" fill="#00aeef"/></svg>
<div class="hr" style="top:926.6px"></div>

<div id="scroll"></div>
<div id="thumb"></div>
</body></html>
